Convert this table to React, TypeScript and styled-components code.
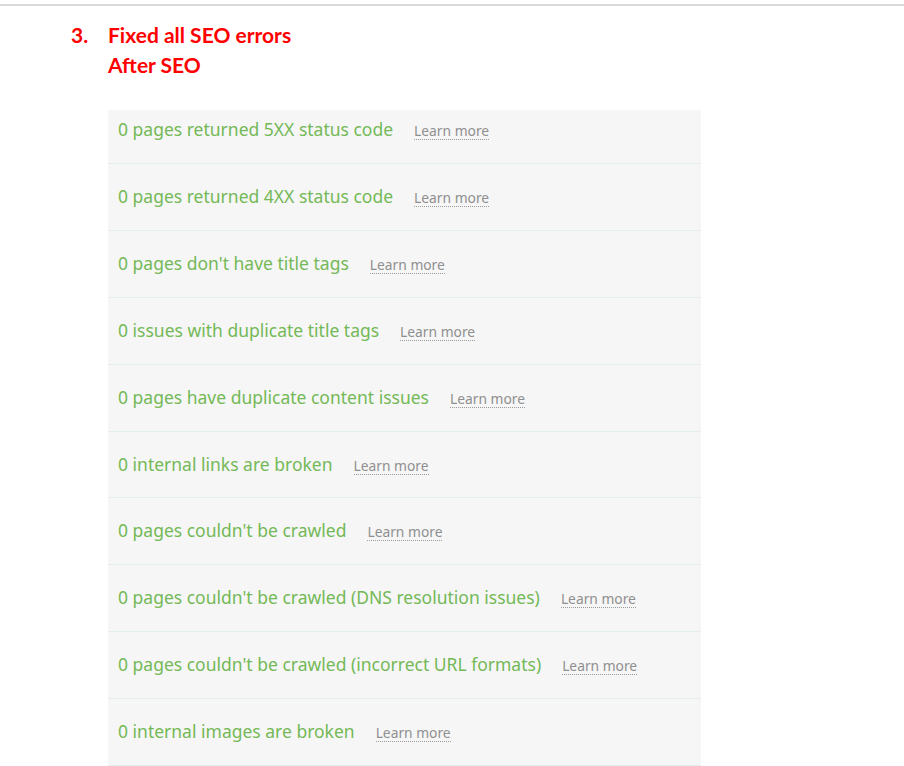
import React from "react";
import styled, { createGlobalStyle } from "styled-components";

const Global = createGlobalStyle`
  html, body { margin: 0; padding: 0; background: #ffffff; }
  body { font-family: "Noto Sans", "DejaVu Sans", sans-serif; }
`;

const Page = styled.div`
  width: 904px;
  min-height: 766px;
  background: #fff;
  overflow: hidden;
`;

const TopRule = styled.div`
  margin-top: 4px;
  height: 2px;
  background: #d9d9d9;
`;

const Heading = styled.div`
  display: grid;
  grid-template-columns: 37px auto;
  margin: 14px 0 0 71px;
  font-family: "Lato", "Open Sans", sans-serif;
  font-weight: 700;
  font-size: 21px;
  line-height: 30px;
  color: #ff0000;
`;

const Num = styled.span``;

const Lines = styled.div`
  display: flex;
  flex-direction: column;
`;

const Panel = styled.div`
  margin: 30px 0 0 108px;
  width: 593px;
  background: #f6f6f6;
`;

const Row = styled.div<{ $first?: boolean }>`
  box-sizing: border-box;
  display: flex;
  align-items: baseline;
  gap: 21px;
  height: ${(p) => (p.$first ? "54px" : "66.9px")};
  padding: ${(p) => (p.$first ? "8px" : "21px")} 10px 0;
  border-bottom: 1px solid #e3ecef;
`;

const Issue = styled.span`
  font-size: 17.5px;
  line-height: 22px;
  color: #74b957;
`;

const Learn = styled.a`
  font-size: 13.8px;
  line-height: 16px;
  color: #8f8f8f;
  text-decoration: none;
  border-bottom: 1px dotted #9a9a9a;
  cursor: pointer;
`;

const issues = [
  "0 pages returned 5XX status code",
  "0 pages returned 4XX status code",
  "0 pages don't have title tags",
  "0 issues with duplicate title tags",
  "0 pages have duplicate content issues",
  "0 internal links are broken",
  "0 pages couldn't be crawled",
  "0 pages couldn't be crawled (DNS resolution issues)",
  "0 pages couldn't be crawled (incorrect URL formats)",
  "0 internal images are broken",
];

export default function App() {
  return (
    <Page>
      <Global />
      <TopRule />
      <Heading>
        <Num>3.</Num>
        <Lines>
          <span>Fixed all SEO errors</span>
          <span>After SEO</span>
        </Lines>
      </Heading>
      <Panel>
        {issues.map((t, i) => (
          <Row key={t} $first={i === 0}>
            <Issue>{t}</Issue>
            <Learn>Learn more</Learn>
          </Row>
        ))}
      </Panel>
    </Page>
  );
}
